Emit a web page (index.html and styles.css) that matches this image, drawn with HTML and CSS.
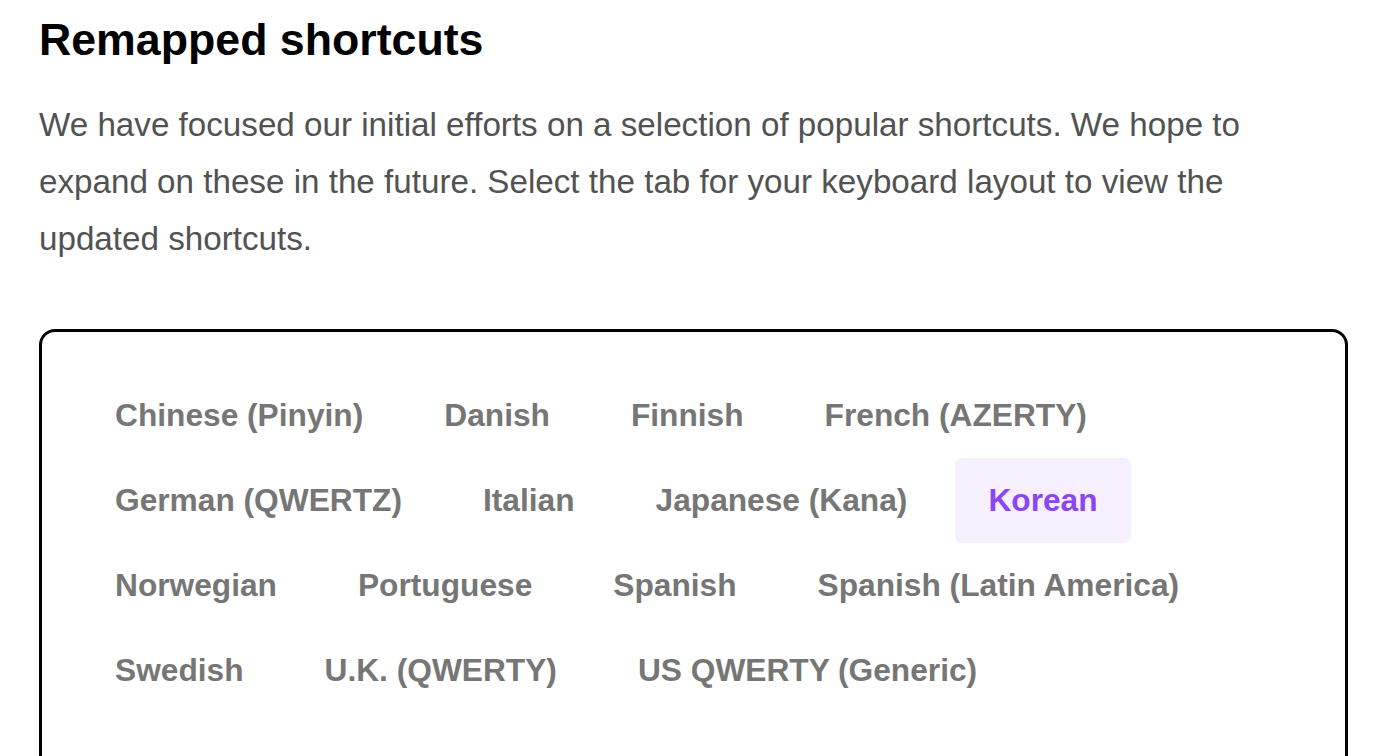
FILE: index.html
```html
<!DOCTYPE html>
<html lang="en">
<head>
<meta charset="utf-8">
<title>Remapped shortcuts</title>
<link rel="stylesheet" href="styles.css">
</head>
<body>
<main class="page">
  <h2 class="title">Remapped shortcuts</h2>
  <p class="intro">We have focused our initial efforts on a selection of popular shortcuts. We hope to expand on these in the future. Select the tab for your keyboard layout to view the updated shortcuts.</p>
  <section class="panel">
    <div class="tabs" role="tablist">
      <button class="tab">Chinese (Pinyin)</button>
      <button class="tab">Danish</button>
      <button class="tab">Finnish</button>
      <button class="tab">French (AZERTY)</button>
      <button class="tab">German (QWERTZ)</button>
      <button class="tab">Italian</button>
      <button class="tab">Japanese (Kana)</button>
      <button class="tab tab-active">Korean</button>
      <button class="tab">Norwegian</button>
      <button class="tab">Portuguese</button>
      <button class="tab">Spanish</button>
      <button class="tab">Spanish (Latin America)</button>
      <button class="tab">Swedish</button>
      <button class="tab">U.K. (QWERTY)</button>
      <button class="tab">US QWERTY (Generic)</button>
    </div>
  </section>
</main>
</body>
</html>
```

FILE: styles.css
```css
* { box-sizing: border-box; }
html, body { margin: 0; background: #fff; }
body { font-family: "Liberation Sans", Arial, sans-serif; }
.page {
  padding: 14px 44px 0 39px;
}
.title {
  margin: 0;
  font-size: 44.7px;
  line-height: 52px;
  font-weight: 700;
  color: #000;
}
.intro {
  margin: 30px 0 0;
  max-width: 1240px;
  font-size: 33.2px;
  line-height: 57px;
  color: #525252;
}
.panel {
  margin-top: 62px;
  border: 3px solid #000;
  border-radius: 16px;
  padding: 41px 40px 60px;
  min-height: 500px;
}
.tabs {
  display: flex;
  flex-wrap: wrap;
  column-gap: 15px;
  max-width: 1140px;
}
.tab {
  height: 85px;
  padding: 0 33px;
  border: 0;
  border-radius: 7px;
  background: transparent;
  font-family: "Liberation Sans", Arial, sans-serif;
  font-size: 31.7px;
  font-weight: 700;
  color: #767676;
  cursor: pointer;
}
.tab-active {
  background: #f6f0fe;
  color: #8b46f2;
}
```
